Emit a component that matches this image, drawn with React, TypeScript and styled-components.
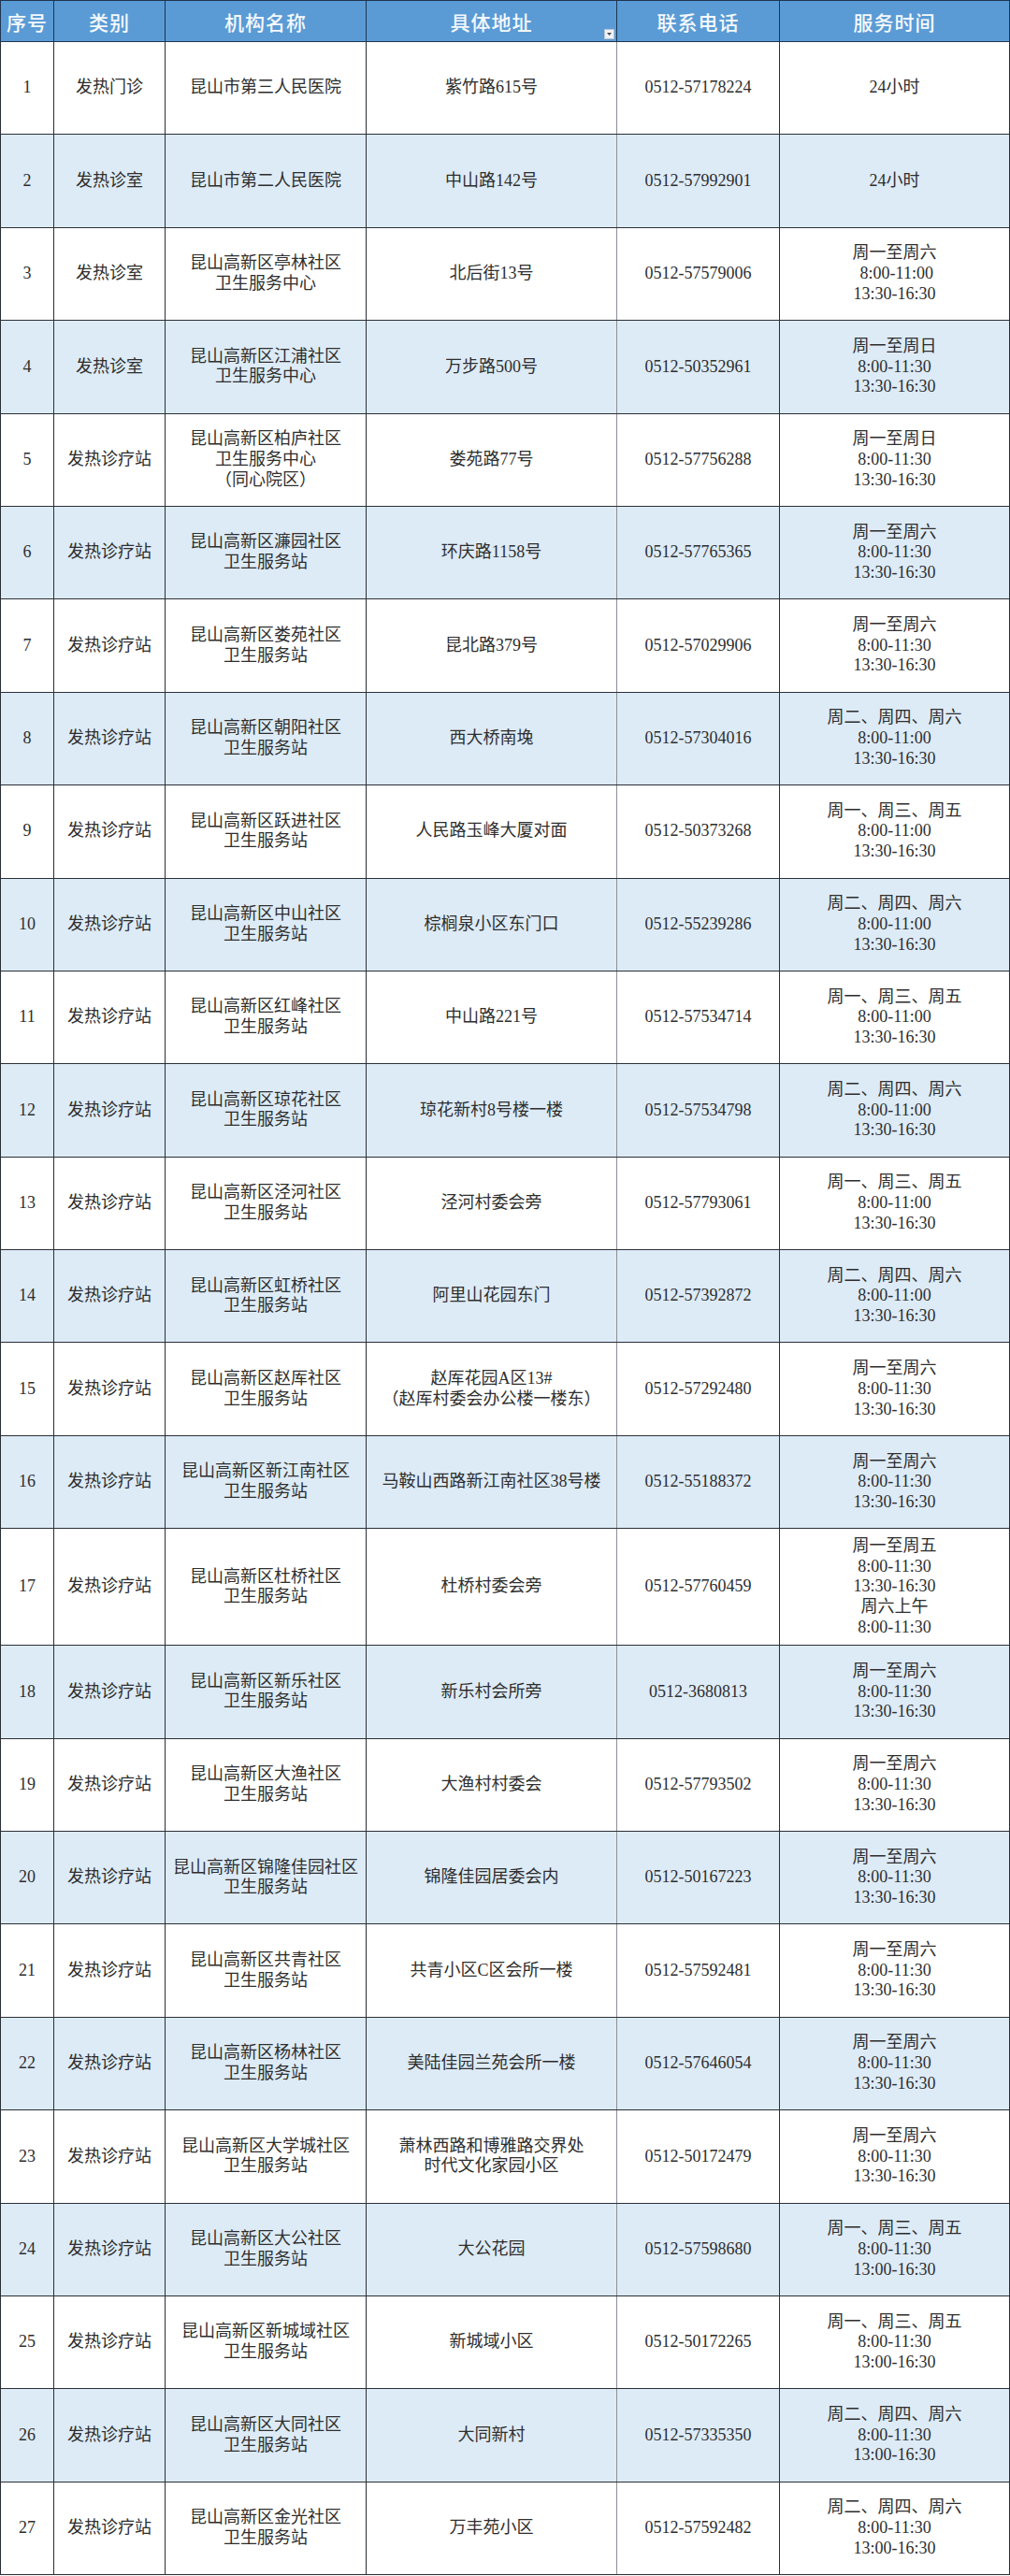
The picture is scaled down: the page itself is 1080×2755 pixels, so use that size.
import React from "react"
import styled, { createGlobalStyle } from "styled-components"

const GlobalStyle = createGlobalStyle`
  html, body {
    margin: 0;
    padding: 0;
    background: #ffffff;
  }
  body {
    width: 1080px;
    font-family: "Liberation Serif", "Noto Sans CJK SC", serif;
  }
`

type Row = {
  kind: string
  name: string
  address: string
  phone: string
  hours: string
}

const H_6_30 = "周一至周六\n8:00-11:30\n13:30-16:30"
const H_246_00 = "周二、周四、周六\n8:00-11:00\n13:30-16:30"
const H_135_00 = "周一、周三、周五\n8:00-11:00\n13:30-16:30"
const H_135_13 = "周一、周三、周五\n8:00-11:30\n13:00-16:30"
const H_246_13 = "周二、周四、周六\n8:00-11:30\n13:00-16:30"

const station = (area: string) => `昆山高新区${area}社区\n卫生服务站`

const rows: Row[] = [
  { kind: "发热门诊", name: "昆山市第三人民医院", address: "紫竹路615号", phone: "0512-57178224", hours: "24小时" },
  { kind: "发热诊室", name: "昆山市第二人民医院", address: "中山路142号", phone: "0512-57992901", hours: "24小时" },
  { kind: "发热诊室", name: "昆山高新区亭林社区\n卫生服务中心", address: "北后街13号", phone: "0512-57579006", hours: "周一至周六\n\u00a08:00-11:00\n13:30-16:30" },
  { kind: "发热诊室", name: "昆山高新区江浦社区\n卫生服务中心", address: "万步路500号", phone: "0512-50352961", hours: "周一至周日\n8:00-11:30\n13:30-16:30" },
  { kind: "发热诊疗站", name: "昆山高新区柏庐社区\n卫生服务中心\n（同心院区）", address: "娄苑路77号", phone: "0512-57756288", hours: "周一至周日\n8:00-11:30\n13:30-16:30" },
  { kind: "发热诊疗站", name: station("濂园"), address: "环庆路1158号", phone: "0512-57765365", hours: H_6_30 },
  { kind: "发热诊疗站", name: station("娄苑"), address: "昆北路379号", phone: "0512-57029906", hours: H_6_30 },
  { kind: "发热诊疗站", name: station("朝阳"), address: "西大桥南堍", phone: "0512-57304016", hours: H_246_00 },
  { kind: "发热诊疗站", name: station("跃进"), address: "人民路玉峰大厦对面", phone: "0512-50373268", hours: H_135_00 },
  { kind: "发热诊疗站", name: station("中山"), address: "棕榈泉小区东门口", phone: "0512-55239286", hours: H_246_00 },
  { kind: "发热诊疗站", name: station("红峰"), address: "中山路221号", phone: "0512-57534714", hours: H_135_00 },
  { kind: "发热诊疗站", name: station("琼花"), address: "琼花新村8号楼一楼", phone: "0512-57534798", hours: H_246_00 },
  { kind: "发热诊疗站", name: station("泾河"), address: "泾河村委会旁", phone: "0512-57793061", hours: H_135_00 },
  { kind: "发热诊疗站", name: station("虹桥"), address: "阿里山花园东门", phone: "0512-57392872", hours: H_246_00 },
  { kind: "发热诊疗站", name: station("赵厍"), address: "赵厍花园A区13#\n（赵厍村委会办公楼一楼东）", phone: "0512-57292480", hours: H_6_30 },
  { kind: "发热诊疗站", name: station("新江南"), address: "马鞍山西路新江南社区38号楼", phone: "0512-55188372", hours: H_6_30 },
  { kind: "发热诊疗站", name: station("杜桥"), address: "杜桥村委会旁", phone: "0512-57760459", hours: "周一至周五\n8:00-11:30\n13:30-16:30\n周六上午\n8:00-11:30" },
  { kind: "发热诊疗站", name: station("新乐"), address: "新乐村会所旁", phone: "0512-3680813", hours: H_6_30 },
  { kind: "发热诊疗站", name: station("大渔"), address: "大渔村村委会", phone: "0512-57793502", hours: H_6_30 },
  { kind: "发热诊疗站", name: station("锦隆佳园"), address: "锦隆佳园居委会内", phone: "0512-50167223", hours: H_6_30 },
  { kind: "发热诊疗站", name: station("共青"), address: "共青小区C区会所一楼", phone: "0512-57592481", hours: H_6_30 },
  { kind: "发热诊疗站", name: station("杨林"), address: "美陆佳园兰苑会所一楼", phone: "0512-57646054", hours: H_6_30 },
  { kind: "发热诊疗站", name: station("大学城"), address: "萧林西路和博雅路交界处\n时代文化家园小区", phone: "0512-50172479", hours: H_6_30 },
  { kind: "发热诊疗站", name: station("大公"), address: "大公花园", phone: "0512-57598680", hours: H_135_13 },
  { kind: "发热诊疗站", name: station("新城域"), address: "新城域小区", phone: "0512-50172265", hours: H_135_13 },
  { kind: "发热诊疗站", name: station("大同"), address: "大同新村", phone: "0512-57335350", hours: H_246_13 },
  { kind: "发热诊疗站", name: station("金光"), address: "万丰苑小区", phone: "0512-57592482", hours: H_246_13 },
]

const columns = [
  { title: "序号", width: 57 },
  { title: "类别", width: 119 },
  { title: "机构名称", width: 215 },
  { title: "具体地址", width: 268, filter: true },
  { title: "联系电话", width: 174 },
  { title: "服务时间", width: 246 },
]

const Sheet = styled.table`
  width: 1079px;
  table-layout: fixed;
  border-collapse: collapse;
  border: 1px solid #1e2a38;
`

const HeadRow = styled.tr`
  height: 44px;
  background: #5b9bd5;
`

const HeadCell = styled.th`
  position: relative;
  padding: 0;
  border: 1px solid #1d3550;
  color: #f5f9fd;
  font-family: "Noto Sans CJK SC", serif;
  font-size: 21px;
  font-weight: 500;
  letter-spacing: 1px;
  text-align: center;
  vertical-align: middle;
`

const FilterButton = styled.span`
  position: absolute;
  right: 2px;
  bottom: 2px;
  width: 11px;
  height: 11px;
  box-sizing: border-box;
  background: #eef2f7;
  border: 1px solid #b9c6d4;
  display: flex;
  align-items: center;
  justify-content: center;
`

const BodyRow = styled.tr<{ $tall?: boolean; $shaded?: boolean }>`
  height: ${({ $tall }) => ($tall ? "125px" : "99.4px")};
  background: ${({ $shaded }) => ($shaded ? "#ddebf7" : "#ffffff")};
`

const Cell = styled.td<{ $soft?: boolean }>`
  padding: 0 4px;
  border: 1px solid #2a2f36;
  border-right-color: ${({ $soft }) => ($soft ? "#8c8f94" : "#2a2f36")};
  color: #2e2e2e;
  font-family: "Liberation Serif", "Noto Sans CJK SC", serif;
  font-size: 18px;
  line-height: 21.7px;
  text-align: center;
  vertical-align: middle;
  white-space: pre-line;
`

export default function App() {
  return (
    <>
      <GlobalStyle />
      <Sheet>
        <colgroup>
          {columns.map(c => (
            <col key={c.title} style={{ width: c.width }} />
          ))}
        </colgroup>
        <thead>
          <HeadRow>
            {columns.map(c => (
              <HeadCell key={c.title}>
                {c.title}
                {c.filter && (
                  <FilterButton>
                    <svg width="5" height="3" viewBox="0 0 5 3">
                      <path d="M0 0h5L2.5 3z" fill="#4a4a4a" />
                    </svg>
                  </FilterButton>
                )}
              </HeadCell>
            ))}
          </HeadRow>
        </thead>
        <tbody>
          {rows.map((r, i) => (
            <BodyRow key={i} $shaded={i % 2 === 1} $tall={r.hours.split("\n").length > 3}>
              <Cell>{i + 1}</Cell>
              <Cell>{r.kind}</Cell>
              <Cell>{r.name}</Cell>
              <Cell $soft>{r.address}</Cell>
              <Cell>{r.phone}</Cell>
              <Cell>{r.hours}</Cell>
            </BodyRow>
          ))}
        </tbody>
      </Sheet>
    </>
  )
}
